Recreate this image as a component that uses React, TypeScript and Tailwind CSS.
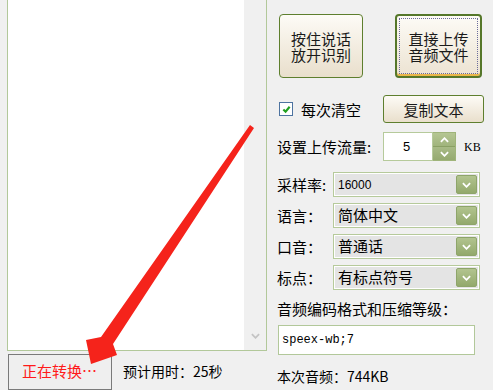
import React from "react";

const cjk = "font-['Noto_Sans_CJK_SC','Noto_Sans',sans-serif]";

function Chevron({ className }: { className?: string }) {
  return (
    <svg viewBox="0 0 10 6" className={className}>
      <path d="M1 1l4 4 4-4" fill="none" stroke="currentColor" strokeWidth="2" />
    </svg>
  );
}

function Select({ value, small }: { value: string; small?: boolean }) {
  return (
    <div className="w-[147px] h-[25px] border border-[#b6ca9b] bg-white p-px">
      <div className="h-full bg-[#e4e4e4] flex items-center justify-between pl-[3px] pr-[1px]">
        <span className={small ? "text-[12px] font-['Liberation_Sans',sans-serif]" : "text-[15px]"}>{value}</span>
        <div className="w-[21px] h-[19px] rounded-[2px] border border-[#8ea56a] bg-gradient-to-b from-[#b2c48f] to-[#93a96c] flex items-center justify-center text-white">
          <Chevron className="w-[9px] h-[6px]" />
        </div>
      </div>
    </div>
  );
}

function SelectRow({ label, value, small, gap }: { label: string; value: string; small?: boolean; gap: string }) {
  return (
    <div className={`flex items-center h-[25px] ${gap}`}>
      <span className="w-[66px] pl-[10px] text-[15px] leading-none whitespace-nowrap">{label}</span>
      <Select value={value} small={small} />
    </div>
  );
}

export default function App() {
  return (
    <div className={`relative w-[493px] h-[390px] bg-[#f0f0f0] overflow-hidden flex text-black ${cjk}`}>
      {/* left: result box */}
      <div className="ml-[7px] w-[260px] flex flex-col">
        <div className="h-[355px] border-x border-b border-[#b2c89a] bg-white flex">
          <div className="flex-1" />
          <div className="w-[22px] bg-[#f0f0f0] flex flex-col justify-end items-center pb-[11px] text-[#c4c4c4]">
            <Chevron className="w-[9px] h-[6px]" />
          </div>
        </div>
        <div className="flex mt-[3px]">
          <div className="ml-px w-[104px] h-[36px] border border-[#7a7a7a] bg-[#efefef] pl-[13px] pt-[8px] text-[15px] leading-[16px] text-[#ff1a1a] whitespace-nowrap">
            正在转换…
          </div>
          <div className="ml-[11px] pt-[9px] text-[14px] leading-[16px] whitespace-nowrap">预计用时：25秒</div>
        </div>
      </div>

      {/* right: controls */}
      <div className="flex flex-col w-[226px]">
        <div className="flex mt-[14px] h-[64px]">
          <button className="ml-[12px] w-[84px] h-full rounded-[4px] border border-[#5e7f2e] bg-gradient-to-b from-[#fdfbf6] to-[#e9dfcc] text-[15px] leading-[16px] text-[#1a1a1a] pt-[2px]">
            按住说话<br />放开识别
          </button>
          <button className="ml-[32px] w-[87px] h-full rounded-[4px] border-2 border-[#55772a] shadow-[inset_0_-2px_0_#e9b74a] bg-gradient-to-b from-[#fdfbf6] to-[#ece3d2] p-[2px]">
            <div className="h-full border border-dotted border-[#6b6b9a] flex items-center justify-center text-[15px] leading-[16px] text-[#1a1a1a] pt-[2px]">
              直接上传<br />音频文件
            </div>
          </button>
        </div>

        <div className="flex items-center mt-[17px] h-[28px]">
          <div className="ml-[12px] w-[104px] flex items-center">
            <div className="w-[14px] h-[14px] border border-[#4d73a0] bg-white flex items-center justify-center">
              <svg viewBox="0 0 10 10" className="w-[9px] h-[9px]">
                <path d="M1.5 5l2.5 2.5 4.5-5.5" fill="none" stroke="#21a020" strokeWidth="2.4" />
              </svg>
            </div>
            <span className="ml-[8px] text-[15px] leading-none">每次清空</span>
          </div>
          <button className="w-[101px] h-[28px] rounded-[3px] border border-[#5e7f2e] bg-gradient-to-b from-[#fdfbf6] to-[#e9dfcc] text-[15px] leading-none text-[#1a1a1a]">
            复制文本
          </button>
        </div>

        <div className="flex items-center mt-[9px] h-[29px]">
          <span className="w-[116px] pl-[10px] text-[15px] leading-none whitespace-nowrap">设置上传流量:</span>
          <div className="w-[50px] h-full border border-[#b6ca9b] bg-white pl-[19px] flex items-center text-[13px] font-['Liberation_Sans',sans-serif]">
            5
          </div>
          <div className="w-[23px] h-full flex flex-col border border-[#9fb47a] border-l-0">
            <div className="flex-1 bg-gradient-to-b from-[#b5c693] to-[#a0b47c] border-b border-[#8aa064] flex items-center justify-center text-white">
              <Chevron className="w-[9px] h-[6px] rotate-180" />
            </div>
            <div className="flex-1 bg-gradient-to-b from-[#a8ba86] to-[#95aa70] flex items-center justify-center text-white">
              <Chevron className="w-[9px] h-[6px]" />
            </div>
          </div>
          <span className="ml-[8px] text-[12px] font-['Liberation_Serif',serif]">KB</span>
        </div>

        <SelectRow label="采样率:" value="16000" small gap="mt-[11px]" />
        <SelectRow label="语言：" value="简体中文" gap="mt-[6px]" />
        <SelectRow label="口音：" value="普通话" gap="mt-[6px]" />
        <SelectRow label="标点：" value="有标点符号" gap="mt-[6px]" />

        <div className="mt-[9px] h-[20px] pl-[10px] text-[15px] leading-[20px] whitespace-nowrap">音频编码格式和压缩等级：</div>
        <div className="mt-[6px] ml-[11px] w-[197px] h-[30px] border border-[#b2c89a] bg-white flex items-center pl-[3px] text-[12px] font-['Liberation_Mono',monospace]">
          speex-wb;7
        </div>
        <div className="mt-[13px] pl-[10px] text-[14px] leading-[16px] whitespace-nowrap">本次音频：744KB</div>
      </div>

      {/* annotation arrow */}
      <svg className="absolute left-0 top-0 pointer-events-none" width="493" height="390">
        <polygon points="250,125 254,128 113,344 117,355 91,364 86,340 101,337" fill="#f5231b" />
      </svg>
    </div>
  );
}
